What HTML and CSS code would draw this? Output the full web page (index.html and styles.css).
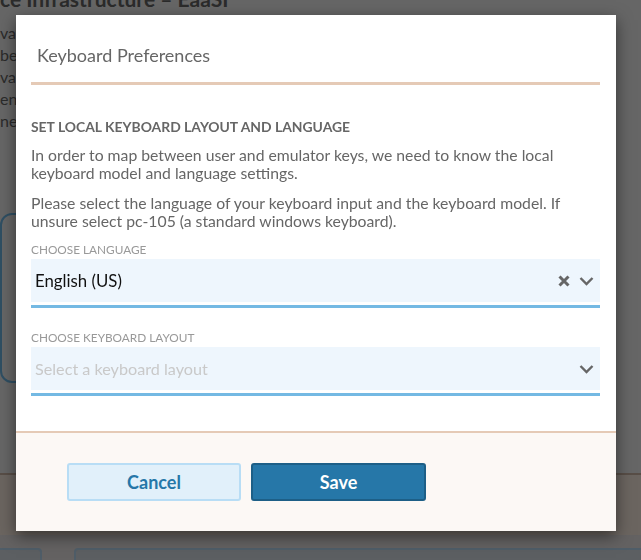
FILE: index.html
```html
<!DOCTYPE html>
<html lang="en">
<head>
<meta charset="utf-8">
<title>Keyboard Preferences</title>
<link rel="stylesheet" href="styles.css">
</head>
<body>
<div class="page">
  <h1 class="bg-title">ce Infrastructure – EaaSI</h1>
  <div class="bg-lines">
    <p>vation and access</p>
    <p>bers of the network</p>
    <p>vate environments</p>
    <p>environments</p>
    <p>nework</p>
  </div>
  <div class="bg-card"></div>
  <div class="bg-footer">
    <div class="bg-band"></div>
    <div class="bg-strip"></div>
    <div class="bg-tabs">
      <div class="bg-tab bg-tab-small"></div>
      <div class="bg-tab bg-tab-wide"></div>
    </div>
  </div>
</div>

<div class="backdrop"></div>

<div class="modal" role="dialog" aria-labelledby="kp-title">
  <div class="modal-header">
    <h2 id="kp-title" class="modal-title">Keyboard Preferences</h2>
  </div>
  <div class="modal-body">
    <h3 class="section-title">SET LOCAL KEYBOARD LAYOUT AND LANGUAGE</h3>
    <p class="text">In order to map between user and emulator keys, we need to know the local keyboard model and language settings.</p>
    <p class="text text-second">Please select the language of your keyboard input and the keyboard model. If unsure select pc-105 (a standard windows keyboard).</p>

    <div class="field field-first">
      <label class="field-label">CHOOSE LANGUAGE</label>
      <div class="select-wrap">
        <div class="select">
          <span class="select-value">English (US)</span>
          <span class="select-icons">
            <svg class="icon-clear" width="12" height="12" viewBox="0 0 12 12"><path d="M1.5 1.5 L10.5 10.5 M10.5 1.5 L1.5 10.5" stroke="#666" stroke-width="3" stroke-linecap="butt"/></svg>
            <svg class="icon-chevron" width="15" height="10" viewBox="0 0 15 10"><path d="M1.5 2 L7.5 8 L13.5 2" fill="none" stroke="#666" stroke-width="2.4"/></svg>
          </span>
        </div>
      </div>
    </div>

    <div class="field">
      <label class="field-label">CHOOSE KEYBOARD LAYOUT</label>
      <div class="select-wrap">
        <div class="select">
          <span class="select-placeholder">Select a keyboard layout</span>
          <span class="select-icons">
            <svg class="icon-chevron" width="15" height="10" viewBox="0 0 15 10"><path d="M1.5 2 L7.5 8 L13.5 2" fill="none" stroke="#666" stroke-width="2.4"/></svg>
          </span>
        </div>
      </div>
    </div>
  </div>
  <div class="modal-footer">
    <button class="btn btn-cancel" type="button">Cancel</button>
    <button class="btn btn-save" type="button">Save</button>
  </div>
</div>
</body>
</html>
```

FILE: styles.css
```css
* { box-sizing: border-box; }

html, body {
  margin: 0;
  padding: 0;
}

body {
  width: 641px;
  height: 560px;
  overflow: hidden;
  font-family: Lato, "Open Sans", "Liberation Sans", sans-serif;
  background: #cccccc;
}

/* ---------- background page (under the backdrop) ---------- */
.page {
  width: 641px;
  height: 560px;
  overflow: hidden;
  display: flex;
  flex-direction: column;
  background: #cccccc;
  color: #565656;
}

.bg-title {
  margin: -14px 0 0 0;
  font-size: 21px;
  font-weight: 700;
  line-height: 26px;
  white-space: nowrap;
}

.bg-lines {
  margin-top: 10px;
}

.bg-lines p {
  margin: 0;
  font-size: 16px;
  line-height: 22px;
  white-space: nowrap;
}

.bg-card {
  margin-top: 81px;
  flex: none;
  width: 220px;
  height: 170px;
  border: 2px solid #5e9ec6;
  border-radius: 12px;
}

.bg-footer {
  margin-top: 90px;
  flex: none;
  display: flex;
  flex-direction: column;
}

.bg-band {
  height: 62px;
  border-top: 2px solid #b09c8e;
  background: #d6cac0;
}

.bg-strip {
  height: 13px;
  background: #c8c4c4;
}

.bg-tabs {
  display: flex;
  gap: 32px;
  height: 40px;
  background: #c8c4c4;
}

.bg-tab {
  height: 40px;
  border: 2px solid #9ebad0;
  border-radius: 4px;
  background: #b8bec4;
}

.bg-tab-small { width: 48px; margin-left: -6px; }
.bg-tab-wide { flex: 1; margin-right: -10px; }

/* ---------- backdrop ---------- */
.backdrop {
  position: fixed;
  inset: 0;
  background: rgba(0, 0, 0, 0.5);
}

/* ---------- modal ---------- */
.modal {
  position: absolute;
  left: 16px;
  top: 15px;
  width: 600px;
  background: #ffffff;
  box-shadow: 0 5px 15px rgba(0, 0, 0, 0.5);
  display: flex;
  flex-direction: column;
}

.modal-header {
  margin: 0 16px 0 15px;
  padding: 28px 6px 15px;
  border-bottom: 3px solid #e5cab6;
}

.modal-title {
  margin: 0;
  font-size: 18px;
  font-weight: 400;
  line-height: 24px;
  color: #666666;
}

.modal-body {
  padding: 33px 16px 35px 15px;
  display: flex;
  flex-direction: column;
}

.section-title {
  margin: 0;
  font-size: 13.9px;
  font-weight: 700;
  line-height: 18px;
  color: #666666;
}

.text {
  margin: 10px 0 0;
  font-size: 15.75px;
  line-height: 18px;
  color: #666666;
  padding-right: 20px;
}

.text-second {
  margin-top: 12px;
}

.field {
  margin-top: 23px;
  display: flex;
  flex-direction: column;
}

.field-first {
  margin-top: 13px;
}

.field-label {
  font-size: 11.8px;
  line-height: 14px;
  color: #999999;
  margin-bottom: 2px;
}

.select-wrap {
  padding-bottom: 3px;
  border-bottom: 3px solid #74b9e3;
}

.select {
  height: 43px;
  background: #eef6fd;
  display: flex;
  align-items: center;
  justify-content: space-between;
  padding: 0 6px 0 4px;
}

.select-value {
  font-size: 16.8px;
  color: #111111;
}

.select-placeholder {
  font-size: 16.2px;
  color: #c9c9c9;
}

.select-icons {
  display: flex;
  align-items: center;
  gap: 9px;
}

.icon-clear { display: block; }
.icon-chevron { display: block; }

/* ---------- footer ---------- */
.modal-footer {
  border-top: 2px solid #e5cab6;
  background: #fcf8f5;
  padding: 30px 20px 30px 51px;
  display: flex;
  gap: 10px;
}

.btn {
  height: 38px;
  border-radius: 3px;
  font-family: Lato, "Open Sans", "Liberation Sans", sans-serif;
  font-size: 18px;
  font-weight: 700;
  cursor: pointer;
}

.btn-cancel {
  width: 174px;
  background: #e1f0fa;
  border: 2px solid #b8ddf5;
  color: #2677a8;
}

.btn-save {
  width: 175px;
  background: #2677a8;
  border: 2px solid #1d5f87;
  color: #ffffff;
}
```
